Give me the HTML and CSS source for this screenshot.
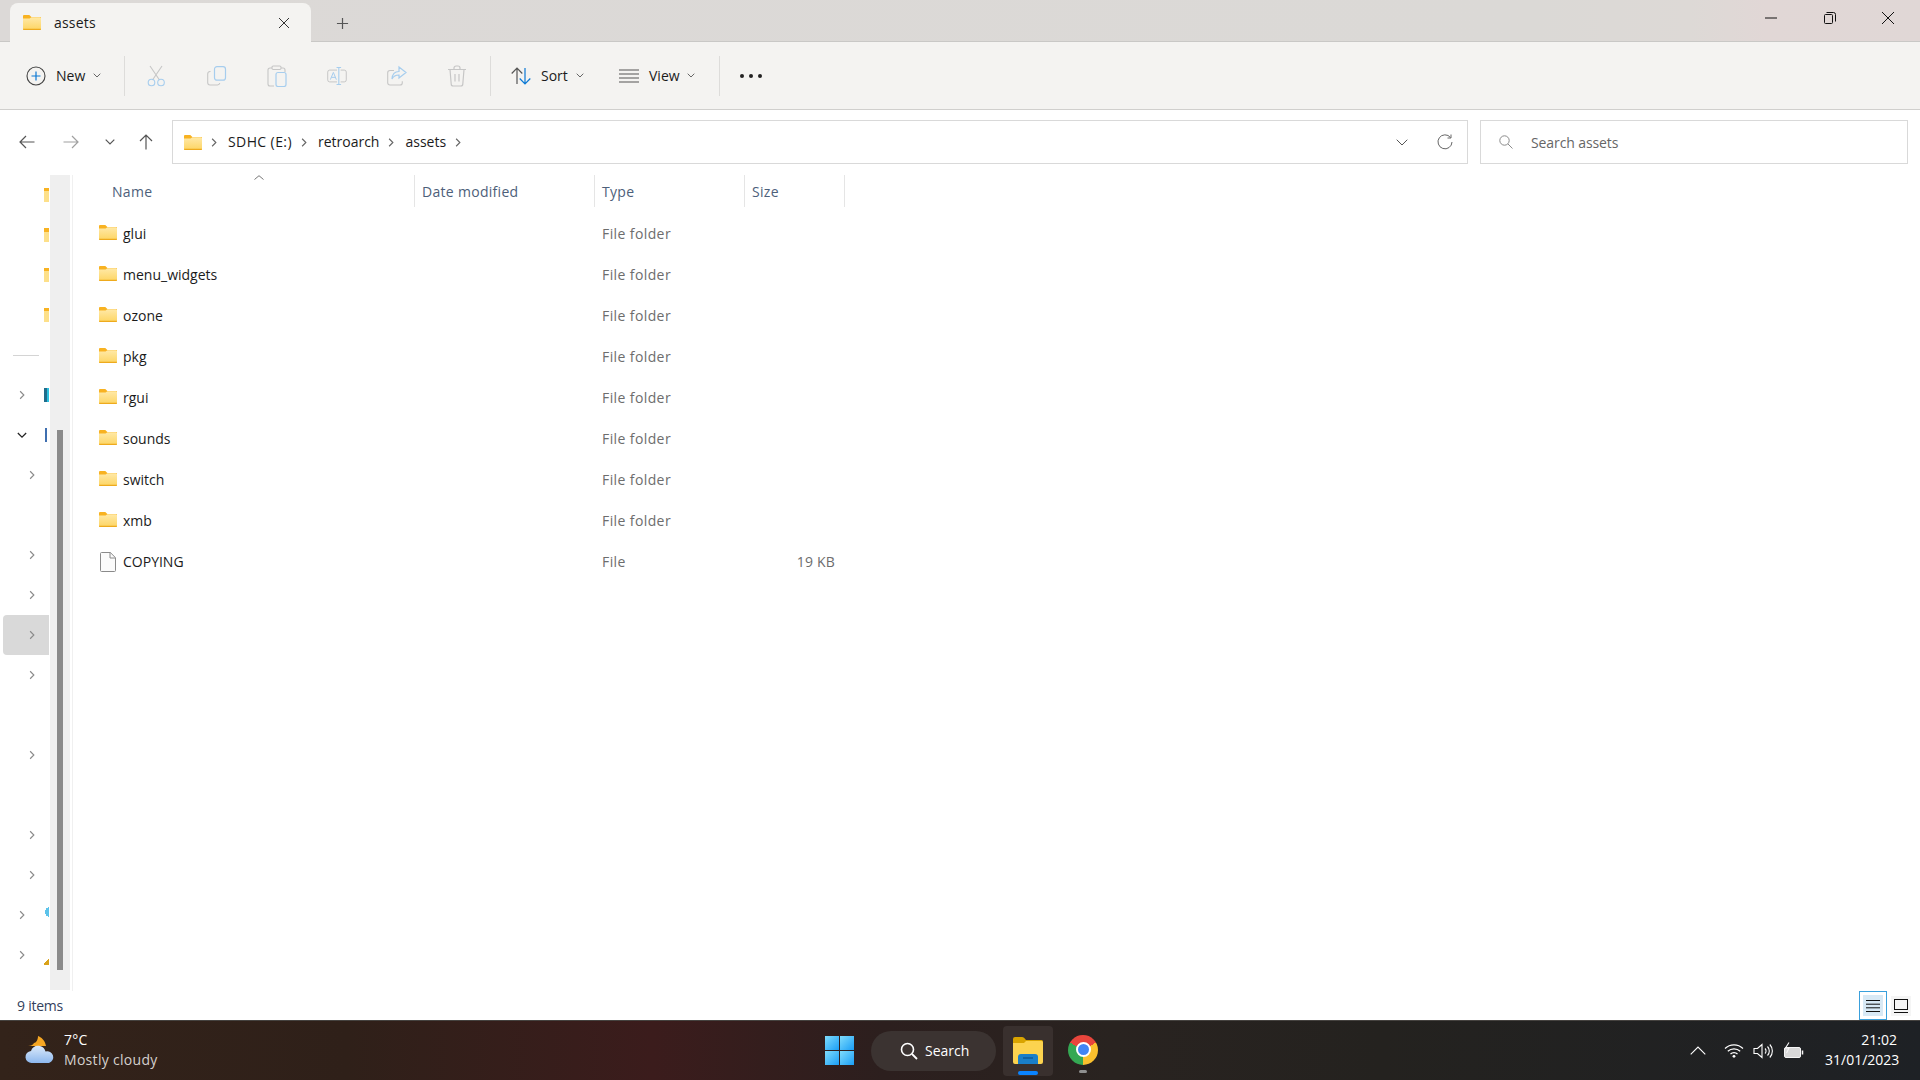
FILE: index.html
```html
<!DOCTYPE html>
<html>

<head>
    <title>assets - File Explorer</title>
    <link rel="stylesheet" href="styles.css">
</head>

<body>
    <svg class="defs" width="0" height="0">
        <symbol id="folder" viewBox="0 0 18 15">
            <path d="M0 1.2C0 .5.5 0 1.2 0h4.600c.4 0 .7.1 1 .4L8.400 2H18v3H0z" fill="#f8b221"/>
            <path d="M0 3.600h6.600L8.400 2.200h8.700c.5 0 .9.4.9.9V14c0 .5-.4 1-1 1H1c-.5 0-1-.5-1-1z" fill="url(#folderFill)"/>
            <path d="M0 13.800h18v.2c0 .5-.4 1-1 1H1c-.5 0-1-.5-1-1z" fill="#eeaa1d"/>
        </symbol>
        <linearGradient id="folderFill" x1="0" y1="0" x2="0" y2="1">
            <stop offset="0" stop-color="#ffe9a8"/>
            <stop offset="1" stop-color="#fdd563"/>
        </linearGradient>
        <symbol id="chev" viewBox="0 0 8 12">
            <path d="M1.500 1l5 5-5 5" fill="none" stroke="currentColor" stroke-width="1.500"/>
        </symbol>
        <symbol id="down" viewBox="0 0 8 5">
            <path d="M.7.7L4 4l3.300-3.300" fill="none" stroke="currentColor" stroke-width="1"/>
        </symbol>
    </svg>

    <!-- Title bar with tab -->
    <div class="titlebar">
        <div class="tab">
            <svg class="ico-folder"><use href="#folder"/></svg>
            <span class="tab-name">assets</span>
            <svg class="tab-close" viewBox="0 0 12 12"><path d="M1 1l10 10M11 1L1 11" stroke="#333" fill="none"/></svg>
        </div>
        <svg class="tab-add" viewBox="0 0 14 14"><path d="M7 1v12M1 7h12" stroke="#555" stroke-width="1.300" fill="none"/></svg>
        <div class="winctl">
            <svg viewBox="0 0 12 12"><path d="M0 6h12" stroke="#111" fill="none"/></svg>
            <svg viewBox="0 0 12 12"><path d="M.5 3.500a1 1 0 0 1 1-1h6a1 1 0 0 1 1 1v7a1 1 0 0 1-1 1h-6a1 1 0 0 1-1-1z M2.500 .5h7a2 2 0 0 1 2 2v7" stroke="#111" fill="none"/></svg>
            <svg viewBox="0 0 12 12"><path d="M0 0l12 12M12 0L0 12" stroke="#111" fill="none"/></svg>
        </div>
    </div>

    <!-- Command bar -->
    <div class="toolbar">
        <div class="tool tool-new">
            <svg class="tool-ico" viewBox="0 0 20 20"><circle cx="10" cy="10" r="9" fill="none" stroke="#444" stroke-width="1.100"/><path d="M10 5.500v9M5.500 10h9" stroke="#0a78d4" stroke-width="1.200"/></svg>
            <span>New</span>
            <svg class="caret"><use href="#down"/></svg>
        </div>
        <div class="sep"></div>
        <div class="tool-off tool-cut">
            <svg viewBox="0 0 20 22"><path d="M3 1l9.500 14M15 1L5.500 15" fill="none" stroke="#c6c6c6" stroke-width="1.100"/><circle cx="4.500" cy="17.500" r="3.300" fill="none" stroke="#a6cdee" stroke-width="1.100"/><circle cx="14" cy="17.500" r="3.300" fill="none" stroke="#a6cdee" stroke-width="1.100"/></svg>
        </div>
        <div class="tool-off">
            <svg viewBox="0 0 20 20"><path d="M3.500 5.500h-.5A2.500 2.500 0 0 0 .7 8v8.500A2.500 2.500 0 0 0 3 19h7.500a2.500 2.500 0 0 0 2.300-2" fill="none" stroke="#c6c6c6" stroke-width="1.100"/><rect x="7.500" y=".7" width="11" height="13.500" rx="2.500" fill="none" stroke="#a6cdee" stroke-width="1.200"/></svg>
        </div>
        <div class="tool-off">
            <svg viewBox="0 0 20 22"><path d="M5 3H3a2 2 0 0 0-2 2v14a2 2 0 0 0 2 2h4M14 3h2a2 2 0 0 1 2 2v2" fill="none" stroke="#c6c6c6" stroke-width="1.100"/><rect x="5" y="1" width="9" height="3.500" rx="1.200" fill="none" stroke="#c6c6c6" stroke-width="1.100"/><rect x="9" y="7.500" width="10" height="14" rx="2" fill="none" stroke="#a6cdee" stroke-width="1.200"/></svg>
        </div>
        <div class="tool-off">
            <svg viewBox="0 0 22 20"><path d="M11 3.500H3a2.200 2.200 0 0 0-2.200 2.200v8.600A2.200 2.200 0 0 0 3 16.500h8M15 3.500h4a2.200 2.200 0 0 1 2.200 2.200v8.600a2.200 2.200 0 0 1-2.200 2.200h-4" fill="none" stroke="#c6c6c6" stroke-width="1.100"/><path d="M13 .7v18.600M10.500.7h5M10.500 19.300h5" fill="none" stroke="#a6cdee" stroke-width="1.200"/><path d="M3.700 14L7 6l3.300 8M4.800 11.500h4.400" fill="none" stroke="#a6cdee" stroke-width="1.100"/></svg>
        </div>
        <div class="tool-off">
            <svg viewBox="0 0 20 20"><path d="M7 4.500H3A2.300 2.300 0 0 0 .7 6.800v10A2.300 2.300 0 0 0 3 19h10a2.300 2.300 0 0 0 2.300-2.300v-1.500" fill="none" stroke="#c6c6c6" stroke-width="1.100"/><path d="M12 1l7 5.500-7 5.500V9c-3.500 0-5.500 1-7 4 .3-4.500 2.500-7.500 7-7.500z" fill="none" stroke="#a6cdee" stroke-width="1.200"/></svg>
        </div>
        <div class="tool-off">
            <svg viewBox="0 0 20 22"><path d="M1 4.500h18M7 4.500V3a2 2 0 0 1 2-2h2a2 2 0 0 1 2 2v1.500M3 4.500l1.200 14.500a2 2 0 0 0 2 2h7.600a2 2 0 0 0 2-2L17 4.500M8 9v7.500M12 9v7.500" fill="none" stroke="#c6c6c6" stroke-width="1.200"/></svg>
        </div>
        <div class="sep sep-sort"></div>
        <div class="tool tool-sort">
            <svg class="tool-ico" viewBox="0 0 20 18"><path d="M6 17V1.500M.7 6.500L6 1l5.300 5.500" fill="none" stroke="#555" stroke-width="1.200"/><path d="M14 1v15.500M8.700 11.500L14 17l5.300-5.500" fill="none" stroke="#0a78d4" stroke-width="1.200"/></svg>
            <span>Sort</span>
            <svg class="caret"><use href="#down"/></svg>
        </div>
        <div class="tool tool-view">
            <svg class="tool-ico" viewBox="0 0 20 14"><path d="M0 1h20M0 5h20M0 9h20M0 13h20" fill="none" stroke="#555" stroke-width="1.100"/></svg>
            <span>View</span>
            <svg class="caret"><use href="#down"/></svg>
        </div>
        <div class="sep"></div>
        <div class="dots"><i></i><i></i><i></i></div>
    </div>

    <!-- Address row -->
    <div class="addressrow">
        <div class="navbtns">
            <svg viewBox="0 0 16 14"><path d="M15.500 7H1M7 1L1 7l6 6" fill="none" stroke="#555" stroke-width="1.200"/></svg>
            <svg class="off" viewBox="0 0 16 14"><path d="M.5 7H15M9 1l6 6-6 6" fill="none" stroke="#a0a0a0" stroke-width="1.200"/></svg>
            <svg class="mini" viewBox="0 0 10 6"><path d="M.7.7L5 5 9.300.7" fill="none" stroke="#555" stroke-width="1.200"/></svg>
            <svg class="up" viewBox="0 0 14 16"><path d="M7 15.500V1M1 7l6-6 6 6" fill="none" stroke="#555" stroke-width="1.200"/></svg>
        </div>
        <div class="addressbox">
            <svg class="ico-folder"><use href="#folder"/></svg>
            <svg class="crumb-chev"><use href="#chev"/></svg>
            <span class="crumb-drive">SDHC (E:)</span>
            <svg class="crumb-chev"><use href="#chev"/></svg>
            <span>retroarch</span>
            <svg class="crumb-chev"><use href="#chev"/></svg>
            <span>assets</span>
            <svg class="crumb-chev"><use href="#chev"/></svg>
            <svg class="addr-down" viewBox="0 0 12 7"><path d="M.7.7L6 6 11.300.7" fill="none" stroke="#555" stroke-width="1"/></svg>
            <svg class="addr-refresh" viewBox="0 0 16 16"><path d="M13.500 3.500A7 7 0 1 0 15 8M14 .5v3.500h-3.500" fill="none" stroke="#666" stroke-width="1"/></svg>
        </div>
        <div class="searchbox">
            <svg viewBox="0 0 14 14"><circle cx="5.500" cy="5.500" r="4.700" fill="none" stroke="#8a8a8a"/><path d="M9 9l4.500 4.500" stroke="#8a8a8a"/></svg>
            <span>Search assets</span>
        </div>
    </div>

    <!-- Nav pane and file list -->
    <div class="main">
        <div class="nav">
            <div class="nav-row"><span class="nav-chev"></span><span class="clip clip-y"></span></div>
            <div class="nav-row"><span class="nav-chev"></span><span class="clip clip-y"></span></div>
            <div class="nav-row"><span class="nav-chev"></span><span class="clip clip-y"></span></div>
            <div class="nav-row"><span class="nav-chev"></span><span class="clip clip-y"></span></div>
            <div class="nav-row"><div class="nav-rule"></div></div>
            <div class="nav-row"><svg class="nav-chev"><use href="#chev"/></svg><span class="clip clip-b"></span></div>
            <div class="nav-row"><svg class="nav-chev open" viewBox="0 0 12 8"><path d="M1 1l5 5 5-5" fill="none" stroke="#222" stroke-width="1.500"/></svg><span class="clip clip-pc"></span></div>
            <div class="nav-row sub"><svg class="nav-chev"><use href="#chev"/></svg></div>
            <div class="nav-row"></div>
            <div class="nav-row sub"><svg class="nav-chev"><use href="#chev"/></svg></div>
            <div class="nav-row sub"><svg class="nav-chev"><use href="#chev"/></svg></div>
            <div class="nav-row sub selected"><svg class="nav-chev"><use href="#chev"/></svg></div>
            <div class="nav-row sub"><svg class="nav-chev"><use href="#chev"/></svg></div>
            <div class="nav-row"></div>
            <div class="nav-row sub"><svg class="nav-chev"><use href="#chev"/></svg></div>
            <div class="nav-row"></div>
            <div class="nav-row sub"><svg class="nav-chev"><use href="#chev"/></svg></div>
            <div class="nav-row sub"><svg class="nav-chev"><use href="#chev"/></svg></div>
            <div class="nav-row"><svg class="nav-chev"><use href="#chev"/></svg><span class="clip clip-net"></span></div>
            <div class="nav-row"><svg class="nav-chev"><use href="#chev"/></svg><span class="clip clip-lin"></span></div>
        </div>
        <div class="scrolltrack"><div class="scrollthumb"></div></div>
        <div class="files">
            <div class="head">
                <div class="col-name">Name<svg class="sortmark" viewBox="0 0 10 5"><path d="M.5 4.500L5 .7l4.500 3.800" fill="none" stroke="#777"/></svg></div>
                <div class="col-date">Date modified</div>
                <div class="col-type">Type</div>
                <div class="col-size">Size</div>
            </div>
            <div class="row"><div class="col-name"><svg class="ico-folder"><use href="#folder"/></svg>glui</div><div class="col-date"></div><div class="col-type">File folder</div><div class="col-size"></div></div>
            <div class="row"><div class="col-name"><svg class="ico-folder"><use href="#folder"/></svg>menu_widgets</div><div class="col-date"></div><div class="col-type">File folder</div><div class="col-size"></div></div>
            <div class="row"><div class="col-name"><svg class="ico-folder"><use href="#folder"/></svg>ozone</div><div class="col-date"></div><div class="col-type">File folder</div><div class="col-size"></div></div>
            <div class="row"><div class="col-name"><svg class="ico-folder"><use href="#folder"/></svg>pkg</div><div class="col-date"></div><div class="col-type">File folder</div><div class="col-size"></div></div>
            <div class="row"><div class="col-name"><svg class="ico-folder"><use href="#folder"/></svg>rgui</div><div class="col-date"></div><div class="col-type">File folder</div><div class="col-size"></div></div>
            <div class="row"><div class="col-name"><svg class="ico-folder"><use href="#folder"/></svg>sounds</div><div class="col-date"></div><div class="col-type">File folder</div><div class="col-size"></div></div>
            <div class="row"><div class="col-name"><svg class="ico-folder"><use href="#folder"/></svg>switch</div><div class="col-date"></div><div class="col-type">File folder</div><div class="col-size"></div></div>
            <div class="row"><div class="col-name"><svg class="ico-folder"><use href="#folder"/></svg>xmb</div><div class="col-date"></div><div class="col-type">File folder</div><div class="col-size"></div></div>
            <div class="row"><div class="col-name"><svg class="ico-file" viewBox="0 0 16 20"><path d="M.5 1.500a1 1 0 0 1 1-1h8.800l5.200 5.200v12.800a1 1 0 0 1-1 1h-13a1 1 0 0 1-1-1z" fill="#fbfbfb" stroke="#8a8a8a"/><path d="M10 .5V6h5.500" fill="none" stroke="#8a8a8a"/></svg>COPYING</div><div class="col-date"></div><div class="col-type">File</div><div class="col-size">19 KB</div></div>
        </div>
    </div>

    <!-- Status bar -->
    <div class="statusbar">
        <span class="count">9 items</span>
        <div class="viewbtns">
            <div class="viewbtn active"><svg viewBox="0 0 14 12"><path d="M0 .5h14M0 4.200h14M0 7.800h14M0 11.500h14" stroke="#111" fill="none"/></svg></div>
            <div class="viewbtn"><svg viewBox="0 0 14 14"><rect x=".5" y=".5" width="13" height="10" fill="none" stroke="#111"/><path d="M0 13.500h14" stroke="#111"/></svg></div>
        </div>
    </div>

    <!-- Windows taskbar -->
    <div class="taskbar">
        <div class="weather">
            <svg class="weather-ico" viewBox="0 0 32 30">
                <path d="M14 1c3 1 7 4 8 10H4c3 0 5-1 6-3 2 0 4-3 4-7z" fill="#f5a623"/>
                <path d="M8 28a6 6 0 0 1-1-12c1-4 5-6 9-5 3 .5 5 3 5.500 5.500A5.800 5.800 0 0 1 25 28z" fill="url(#cloudFill)"/>
                <linearGradient id="cloudFill" x1="0" y1="0" x2="0" y2="1">
                    <stop offset="0" stop-color="#dbe9fa"/>
                    <stop offset="1" stop-color="#8db8ee"/>
                </linearGradient>
            </svg>
            <div class="weather-text">
                <div class="temp">7°C</div>
                <div class="sky">Mostly cloudy</div>
            </div>
        </div>
        <div class="apps">
            <div class="start"><i></i><i></i><i></i><i></i></div>
            <div class="task-search">
                <svg viewBox="0 0 18 18"><circle cx="7.500" cy="7.500" r="6" fill="none" stroke="#fff" stroke-width="1.600"/><path d="M12 12l5 5" stroke="#fff" stroke-width="1.800"/></svg>
                <span>Search</span>
            </div>
            <div class="app app-active">
                <svg viewBox="0 0 30 27">
                    <path d="M0 2a2 2 0 0 1 2-2h7c.8 0 1.400.3 2 .8L13 3h15.500A1.500 1.500 0 0 1 30 4.500V8H0z" fill="#d9a400"/>
                    <path d="M0 6h11l2-2h15.500A1.500 1.500 0 0 1 30 5.500V25a2 2 0 0 1-2 2H2a2 2 0 0 1-2-2z" fill="#fcd34f"/>
                    <path d="M5 20a3 3 0 0 1 3-3h14a3 3 0 0 1 3 3v7H5z" fill="#1a7fc9"/>
                    <path d="M10 21h10" stroke="#0f5a97" stroke-width="1.500"/>
                </svg>
                <i class="running blue"></i>
            </div>
            <div class="app app-chrome">
                <div class="chrome"><span></span></div>
                <i class="running"></i>
            </div>
        </div>
        <div class="tray">
            <svg class="tray-up" viewBox="0 0 16 9"><path d="M.7 8.300L8 1l7.300 7.300" fill="none" stroke="#fff" stroke-width="1.100"/></svg>
            <svg class="tray-wifi" viewBox="0 0 20 15"><path d="M1 5.500a13 13 0 0 1 18 0M3.800 8.300a9 9 0 0 1 12.400 0M6.500 11a5 5 0 0 1 7 0" fill="none" stroke="#fff" stroke-width="1.200"/><circle cx="10" cy="13.300" r="1.400" fill="#fff"/></svg>
            <svg class="tray-vol" viewBox="0 0 20 16"><path d="M1 5.500h3.500L9 1.500v13l-4.500-4H1z" fill="none" stroke="#fff" stroke-width="1.100"/><path d="M12 5.500a3.500 3.500 0 0 1 0 5M14.500 3.500a6.500 6.500 0 0 1 0 9M16.800 1.500a9.500 9.500 0 0 1 0 13" fill="none" stroke="#fff" stroke-width="1.100"/></svg>
            <svg class="tray-bat" viewBox="0 0 21 17"><rect x="1.500" y="5.500" width="16" height="10" rx="1.500" fill="#d8d8d8" stroke="#f5f5f5"/><path d="M19.500 8.500v4" stroke="#f5f5f5" stroke-width="1.500"/><path d="M6 .5L2.500 6H6l-2.500 5" fill="none" stroke="#f5f5f5" stroke-width="1.100"/></svg>
            <div class="clock">
                <div>21:02</div>
                <div>31/01/2023</div>
            </div>
        </div>
    </div>
</body>

</html>
```

FILE: styles.css
```css
/* File Explorer window on the Windows 11 desktop */
* {
    box-sizing: border-box;
}

body {
    margin: 0;
    width: 1920px;
    height: 1080px;
    display: flex;
    flex-direction: column;
    overflow: hidden;
    background-color: #ffffff;
    font-family: "Open Sans", "Noto Sans", sans-serif;
    font-size: 14px;
    color: #1b1b1b;
}

.defs {
    position: absolute;
}

svg {
    display: block;
    flex: none;
}

.ico-folder {
    width: 18px;
    height: 15px;
}

/* Title bar */
.titlebar {
    height: 42px;
    display: flex;
    align-items: flex-end;
    padding-left: 10px;
    background: linear-gradient(90deg, #dcd9d7 0%, #dbd9d6 80%, #ddd9d6 88%, #e1d7d6 92%, #e0d7d6 100%);
    border-bottom: 1px solid #c9c8c6;
}

.tab {
    position: relative;
    width: 301px;
    height: 39px;
    margin-bottom: -1px;
    display: flex;
    align-items: center;
    padding-left: 13px;
    background-color: #f4f3f1;
    border-radius: 8px 8px 0 0;
}

.tab-name {
    margin-left: 13px;
    letter-spacing: 0.2px;
}

.tab-close {
    width: 12px;
    height: 12px;
    margin-left: auto;
    margin-right: 21px;
}

.tab-add {
    width: 13px;
    height: 13px;
    margin: 0 0 11px 25px;
}

.winctl {
    margin-left: auto;
    align-self: stretch;
    display: flex;
    align-items: center;
    gap: 46.5px;
    padding-right: 26px;
    padding-bottom: 6px;
}

.winctl svg {
    width: 12px;
    height: 12px;
}

/* Command bar */
.toolbar {
    height: 68px;
    display: flex;
    align-items: center;
    padding-left: 26px;
    background-color: #f4f3f1;
    border-bottom: 1px solid #d0cfcd;
}

.tool {
    display: flex;
    align-items: center;
}

.tool-ico {
    width: 20px;
    height: 20px;
}

.tool span {
    margin-left: 10px;
}

.caret {
    width: 8px;
    height: 5px;
    margin-left: 8px;
    color: #666;
}

.tool-new {
    width: 82px;
}

.sep {
    width: 1px;
    height: 40px;
    margin-left: 16px;
    background-color: #dddcda;
}

.tool-off {
    width: 60px;
    display: flex;
    justify-content: center;
}

.tool-cut {
    margin-left: 2px;
}

.tool-off svg {
    width: 20px;
    height: 22px;
}

.sep-sort {
    margin-left: 3px;
}

.tool-sort {
    width: 108px;
    margin-left: 20px;
}

.tool-view {
    width: 84px;
}

.tool-view .caret {
    margin-left: 7px;
}

.dots {
    margin-left: 20px;
    display: flex;
    gap: 5px;
}

.dots i {
    width: 4px;
    height: 4px;
    border-radius: 50%;
    background-color: #222;
}

/* Address row */
.addressrow {
    height: 65px;
    display: flex;
    align-items: flex-start;
    padding: 10px 12px 0 0;
}

.navbtns {
    width: 172px;
    height: 44px;
    display: flex;
    align-items: center;
    padding-left: 19px;
}

.navbtns svg {
    width: 16px;
    height: 14px;
}

.navbtns .off {
    margin-left: 28px;
}

.navbtns .mini {
    width: 10px;
    height: 6px;
    margin-left: 26px;
}

.navbtns .up {
    width: 14px;
    height: 16px;
    margin-left: 24px;
}

.addressbox {
    width: 1296px;
    height: 44px;
    display: flex;
    align-items: center;
    padding-left: 11px;
    border: 1px solid #d9d9d9;
}

.addressbox span {
    margin-bottom: 2px;
}

.crumb-chev {
    width: 6px;
    height: 9px;
    margin: 0 11px 0 9px;
    color: #666;
}

.crumb-drive {
    letter-spacing: 0.4px;
}

.addr-down {
    width: 12px;
    height: 7px;
    margin-left: auto;
}

.addr-refresh {
    width: 16px;
    height: 16px;
    margin: 0 14px 0 29px;
}

.searchbox {
    width: 428px;
    height: 44px;
    margin-left: 12px;
    display: flex;
    align-items: center;
    padding-left: 18px;
    border: 1px solid #d9d9d9;
    color: #666;
    letter-spacing: -0.1px;
}

.searchbox svg {
    width: 14px;
    height: 14px;
    margin-right: 18px;
}

/* Nav pane */
.main {
    flex: 1;
    min-height: 0;
    display: flex;
}

.nav {
    width: 49px;
    overflow: hidden;
    flex: none;
    margin-right: 1px;
}

.nav-row {
    height: 40px;
    display: flex;
    align-items: center;
    padding-left: 19px;
    color: #8a8a8a;
}

.nav-row.sub {
    padding-left: 29px;
}

.nav-row.selected {
    margin-left: 3px;
    padding-left: 26px;
    background-color: #d9d9d9;
    border-radius: 4px 0 0 4px;
}

.nav-chev {
    width: 6px;
    height: 10px;
    flex: none;
}

.nav-chev.open {
    width: 10px;
    height: 7px;
    margin-left: -2px;
    margin-right: -2px;
}

.clip {
    width: 14px;
    height: 14px;
    margin-left: 19px;
    flex: none;
}

.clip-y {
    background: linear-gradient(180deg, #f8b221 0 25%, #fde08a 25% 100%);
}

.clip-b {
    background: linear-gradient(90deg, #1f6d8c 0 20%, #2cc1e0 20%);
}

.clip-pc {
    width: 2px;
    height: 14px;
    margin-left: 20px;
    background-color: #3f6fb0;
}

.clip-net {
    height: 16px;
    background: radial-gradient(circle at 6px 5px, #5cc3ea 0 5px, transparent 5px);
}

.clip-lin {
    height: 12px;
    margin-top: 8px;
    background: linear-gradient(135deg, transparent 40%, #d9a21a 40%);
}

.nav-rule {
    width: 26px;
    height: 1px;
    margin-left: -6px;
    background-color: #d4d4d4;
}

.scrolltrack {
    width: 20px;
    height: 815px;
    flex: none;
    padding: 255px 7px 20px;
    background-color: #efefef;
}

.scrollthumb {
    height: 540px;
    background-color: #8a8a8a;
}

/* File list */
.files {
    flex: 1;
    margin-left: 2px;
    padding-left: 2px;
    border-left: 1px solid #f0f0f0;
}

.head,
.row {
    display: grid;
    grid-template-columns: 340px 180px 150px 100px;
    width: 770px;
}

.head {
    height: 38px;
    color: #4d607a;
    letter-spacing: 0.3px;
}

.head > div {
    height: 32px;
    display: flex;
    align-items: center;
    padding-left: 7px;
    border-right: 1px solid #e5e5e5;
    position: relative;
}

.head .col-name {
    padding-left: 37px;
}

.sortmark {
    position: absolute;
    left: 179px;
    top: 0;
    width: 10px;
    height: 5px;
}

.row {
    height: 41px;
    align-items: center;
    color: #6d6d6d;
}

.row .col-name {
    display: flex;
    align-items: center;
    gap: 6px;
    padding-left: 24px;
    color: #1b1b1b;
}

.row .ico-folder {
    margin-top: -3px;
}

.row .col-type {
    padding-left: 7px;
    letter-spacing: 0.4px;
}

.row .col-size {
    padding-right: 10px;
    text-align: right;
    letter-spacing: 0.2px;
}

.ico-file {
    width: 16px;
    height: 20px;
    margin: 0 1px;
}

/* Status bar */
.statusbar {
    height: 29px;
    display: flex;
    align-items: center;
    padding-left: 17px;
    color: #33415c;
    letter-spacing: -0.25px;
}

.viewbtns {
    margin-left: auto;
    display: flex;
    align-items: center;
    gap: 4px;
    padding-right: 9px;
}

.viewbtn {
    width: 20px;
    height: 20px;
    display: flex;
    align-items: center;
    justify-content: center;
    background-color: #f5f5f5;
}

.viewbtn svg {
    width: 14px;
    height: 14px;
}

.viewbtn.active {
    width: 28px;
    height: 29px;
    background-color: #d8e9f5;
    border: 1px solid #3aa0dc;
    box-shadow: inset 0 0 0 3px #ffffff;
}

/* Taskbar */
.taskbar {
    height: 60px;
    display: flex;
    align-items: center;
    color: #ffffff;
    background: linear-gradient(90deg, #33231a 0%, #2f2019 18%, #3b1c1c 34%, #2c1f1e 46%, #292320 58%, #24221f 72%, #1e2125 100%);
    border-top: 1px solid #45423f;
}

.weather {
    width: 825px;
    display: flex;
    align-items: center;
    padding-left: 24px;
    padding-bottom: 2px;
}

.weather-ico {
    width: 32px;
    height: 30px;
    margin-right: 8px;
}

.temp,
.sky {
    line-height: 20px;
    letter-spacing: 0.3px;
}

.sky {
    color: #d4d0cd;
}

.apps {
    display: flex;
    align-items: center;
}

.start {
    width: 29px;
    height: 29px;
    display: grid;
    grid-template-columns: 14px 14px;
    gap: 1px;
}

.start i {
    background: linear-gradient(135deg, #7fdcfc, #1a9ef6);
}

.task-search {
    width: 125px;
    height: 40px;
    margin-left: 17px;
    display: flex;
    align-items: center;
    padding-left: 29px;
    border-radius: 20px;
    background-color: #3b3331;
}

.task-search svg {
    width: 18px;
    height: 18px;
    margin-right: 7px;
}

.app {
    position: relative;
    width: 50px;
    height: 50px;
    display: flex;
    align-items: center;
    justify-content: center;
}

.app-active {
    margin-left: 7px;
    border-radius: 4px;
    background-color: #39302e;
}

.app-active svg {
    width: 30px;
    height: 27px;
}

.app-chrome {
    margin-left: 5px;
}

.running {
    position: absolute;
    left: 21px;
    bottom: 3px;
    width: 8px;
    height: 3px;
    border-radius: 2px;
    background-color: #8f8f8f;
}

.running.blue {
    left: 15px;
    width: 20px;
    height: 4px;
    bottom: 1px;
    background-color: #0a84ff;
}

.chrome {
    width: 30px;
    height: 30px;
    margin-bottom: 2px;
    display: flex;
    align-items: center;
    justify-content: center;
    border-radius: 50%;
    background: conic-gradient(from -60deg, #e8453c 0 120deg, #fbc02d 120deg 240deg, #34a853 240deg 360deg);
}

.chrome span {
    width: 15px;
    height: 15px;
    border-radius: 50%;
    background-color: #4285f4;
    border: 2px solid #ffffff;
}

.tray {
    margin-left: auto;
    display: flex;
    align-items: center;
    padding-right: 23px;
}

.tray-up {
    width: 16px;
    height: 9px;
}

.tray-wifi {
    width: 20px;
    height: 15px;
    margin-left: 18px;
}

.tray-vol {
    width: 20px;
    height: 16px;
    margin-left: 9px;
}

.tray-bat {
    width: 21px;
    height: 17px;
    margin-left: 10px;
}

.clock {
    width: 72px;
    margin-left: 21px;
    padding-bottom: 2px;
    text-align: right;
    line-height: 20px;
    white-space: nowrap;
}
```
